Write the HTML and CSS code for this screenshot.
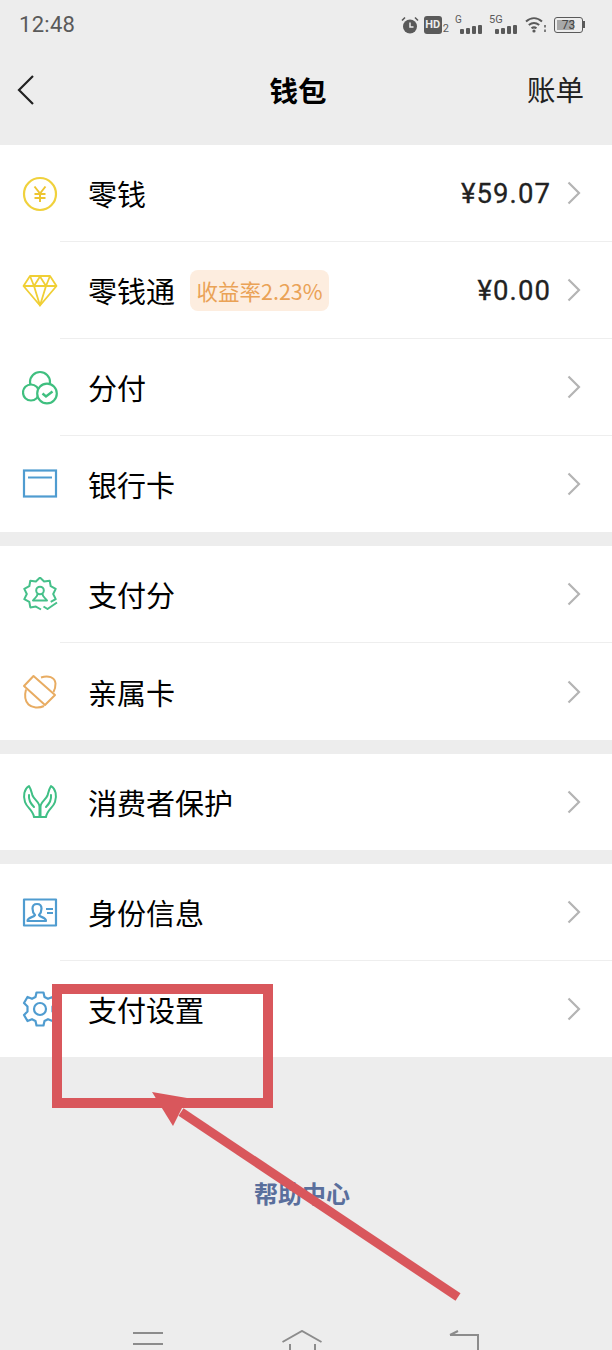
FILE: index.html
```html
<!DOCTYPE html>
<html lang="zh-CN">
<head>
<meta charset="utf-8">
<title>钱包</title>
<link rel="stylesheet" href="styles.css">
</head>
<body>
<div class="screen">
  <div class="status">
    <span class="time">12:48</span>
    <div class="status-icons">
      <svg class="s-alarm" width="18" height="18" viewBox="0 0 18 18"><circle cx="9" cy="10.500" r="7" fill="#5a5a5a"/><path d="M9 6.500V11H12.500" fill="none" stroke="#ededed" stroke-width="1.500"/><path d="M1 4.500 4 1.500M17 4.500 14 1.500" stroke="#5a5a5a" stroke-width="1.600"/></svg>
      <span class="hd"><b>HD</b><i>2</i></span>
      <span class="sig"><i>G</i><span class="bars"><u class="b1"></u><u class="b2"></u><u class="b3"></u><u class="b4"></u></span></span>
      <span class="sig sig5"><i>5G</i><span class="bars"><u class="b1"></u><u class="b2"></u><u class="b3"></u><u class="b4"></u></span></span>
      <svg class="s-wifi" width="21" height="17" viewBox="0 0 21 17"><g fill="none" stroke="#5a5a5a" stroke-width="2"><path d="M1 5.500C6 1 12 1 17 5.500"/><path d="M3.800 9C7.300 6.200 10.700 6.200 14.200 9"/><path d="M6.500 12.300C8 11.200 10 11.200 11.500 12.300"/></g><circle cx="9" cy="15" r="1.600" fill="#5a5a5a"/><path d="M20 9v2.500M20 13.500v2.500" stroke="#5a5a5a" stroke-width="1.500"/></svg>
      <span class="battery"><span class="cell"><span class="level"></span><em>73</em></span><span class="cap"></span></span>
    </div>
  </div>

  <header class="nav">
    <svg class="back" width="18" height="30" viewBox="0 0 18 30"><path d="M17 1 3 15 17 29" fill="none" stroke="#222" stroke-width="2.200"/></svg>
    <h1 class="title">钱包</h1>
    <span class="bill">账单</span>
  </header>

  <section class="group">
    <div class="row">
      <svg class="ico" viewBox="0 0 36 36"><circle cx="18" cy="18" r="16" fill="none" stroke="#f0d13c" stroke-width="2.200"/><path d="M12.500 10.500 18 17.500 23.500 10.500M18 17.500V26M12.500 18H23.500M12.500 22H23.500" fill="none" stroke="#edc531" stroke-width="2"/></svg>
      <div class="cell-main"><span class="label">零钱</span><span class="value">¥59.07</span><svg class="chev" width="14" height="24" viewBox="0 0 14 24"><path d="M1.500 1.500 12 12 1.500 22.500" fill="none" stroke="#b4b4b4" stroke-width="2.200"/></svg></div>
    </div>
    <div class="row">
      <svg class="ico" viewBox="0 0 36 36"><g fill="none" stroke="#f0cf35" stroke-width="1.800" stroke-linejoin="round"><path d="M8 3H28L34.500 13 18 32.500 1.500 13Z"/><path d="M1.500 13H34.500M8 3 12 13 18 32.500 24 13 28 3M12 13 18 3.500 24 13"/></g></svg>
      <div class="cell-main"><span class="label">零钱通</span><span class="tag">收益率2.23%</span><span class="value">¥0.00</span><svg class="chev" width="14" height="24" viewBox="0 0 14 24"><path d="M1.500 1.500 12 12 1.500 22.500" fill="none" stroke="#b4b4b4" stroke-width="2.200"/></svg></div>
    </div>
    <div class="row">
      <svg class="ico" viewBox="0 0 36 36"><g fill="#fff" stroke="#3fbf7f" stroke-width="2.200"><circle cx="18" cy="12" r="10"/><circle cx="9" cy="22.500" r="8"/><circle cx="25" cy="23.500" r="9.800"/></g><path d="M20.500 23.500 24 26.500 30.500 21.500" fill="none" stroke="#3fbf7f" stroke-width="2.400"/></svg>
      <div class="cell-main"><span class="label">分付</span><svg class="chev" width="14" height="24" viewBox="0 0 14 24"><path d="M1.500 1.500 12 12 1.500 22.500" fill="none" stroke="#b4b4b4" stroke-width="2.200"/></svg></div>
    </div>
    <div class="row">
      <svg class="ico" viewBox="0 0 36 36"><rect x="2" y="4.500" width="32" height="26" fill="none" stroke="#4f9cd0" stroke-width="2.200"/><path d="M6 11.500H30" stroke="#4f9cd0" stroke-width="2"/></svg>
      <div class="cell-main"><span class="label">银行卡</span><svg class="chev" width="14" height="24" viewBox="0 0 14 24"><path d="M1.500 1.500 12 12 1.500 22.500" fill="none" stroke="#b4b4b4" stroke-width="2.200"/></svg></div>
    </div>
  </section>

  <section class="group">
    <div class="row">
      <svg class="ico" viewBox="0 0 36 36"><g fill="none" stroke="#46c08a" stroke-width="2" stroke-linejoin="round"><path d="M19 32.500 13.900 29.600 8.300 30.400 7.300 24.800 2.300 22.100 4.800 17 2.300 11.900 7.300 9.200 8.300 3.700 13.900 4.500 18 0.500 22.100 4.500 27.700 3.700 28.700 9.200 33.700 11.900 31.200 17 33.700 22.100 28.700 24.800"/><circle cx="18" cy="13.500" r="3.800"/><path d="M15.500 17C15.500 20 13 20.500 11 23.500H25C23 20.500 20.500 20 20.500 17"/><path d="M21.500 29.500 25.500 32 35 25.500"/></g></svg>
      <div class="cell-main"><span class="label">支付分</span><svg class="chev" width="14" height="24" viewBox="0 0 14 24"><path d="M1.500 1.500 12 12 1.500 22.500" fill="none" stroke="#b4b4b4" stroke-width="2.200"/></svg></div>
    </div>
    <div class="row">
      <svg class="ico" viewBox="0 0 36 36"><g fill="none" stroke="#e8ac62" stroke-width="2" stroke-linejoin="round"><path d="M11.500 2 33 21 23 31 2 12Z"/><path d="M19 3.500C26 1 33 3 33.500 9.500C33.500 13 33 15.500 31.500 18"/><path d="M4 15.500C2.500 21 3 27 6.500 30.500C10 34 17 34.500 22 32"/></g></svg>
      <div class="cell-main"><span class="label">亲属卡</span><svg class="chev" width="14" height="24" viewBox="0 0 14 24"><path d="M1.500 1.500 12 12 1.500 22.500" fill="none" stroke="#b4b4b4" stroke-width="2.200"/></svg></div>
    </div>
  </section>

  <section class="group">
    <div class="row">
      <svg class="ico" viewBox="0 0 36 36"><g fill="none" stroke="#3fbf85" stroke-width="2" stroke-linejoin="round" stroke-linecap="round"><path d="M7 2C2 5 1 12 3 18C5 24 11 26 12 33H17.500V23C17.500 18 12.500 16 10.500 11.500C9.500 8 9 5 7 2Z"/><path d="M29 2C34 5 35 12 33 18C31 24 25 26 24 33H18.500V23C18.500 18 23.500 16 25.500 11.500C26.500 8 27 5 29 2Z"/><path d="M7 11C6.500 15 9 20 12 23M29 11C29.500 15 27 20 24 23"/></g></svg>
      <div class="cell-main"><span class="label">消费者保护</span><svg class="chev" width="14" height="24" viewBox="0 0 14 24"><path d="M1.500 1.500 12 12 1.500 22.500" fill="none" stroke="#b4b4b4" stroke-width="2.200"/></svg></div>
    </div>
  </section>

  <section class="group">
    <div class="row">
      <svg class="ico" viewBox="0 0 36 36"><g fill="none" stroke="#4f9cd0" stroke-width="2.200" stroke-linejoin="round"><rect x="2" y="4.500" width="32" height="26"/><path d="M5.500 26C5.500 22 12 22.500 13 20C11 18 10.500 16 10.500 13.500C10.500 10.500 12.500 9 15 9C17.500 9 19.500 10.500 19.500 13.500C19.500 16 19 18 17 20C18 22.500 24 22 24 26Z"/><path d="M24 14H31M25 18H31"/></g></svg>
      <div class="cell-main"><span class="label">身份信息</span><svg class="chev" width="14" height="24" viewBox="0 0 14 24"><path d="M1.500 1.500 12 12 1.500 22.500" fill="none" stroke="#b4b4b4" stroke-width="2.200"/></svg></div>
    </div>
    <div class="row">
      <svg class="ico" viewBox="0 0 36 36"><g fill="none" stroke="#4f9cd0" stroke-width="2.200" stroke-linejoin="round"><path d="M14.500 1.500H21.500L22.500 6 26 7.800 30.500 6 34 12 30.500 15.500V20.500L34 24 30.500 30 26 28.200 22.500 30 21.500 34.500H14.500L13.500 30 10 28.200 5.500 30 2 24 5.500 20.500V15.500L2 12 5.500 6 10 7.800 13.500 6Z"/><circle cx="18" cy="18" r="6"/></g></svg>
      <div class="cell-main"><span class="label">支付设置</span><svg class="chev" width="14" height="24" viewBox="0 0 14 24"><path d="M1.500 1.500 12 12 1.500 22.500" fill="none" stroke="#b4b4b4" stroke-width="2.200"/></svg></div>
    </div>
  </section>

  <footer class="foot">
    <a class="help">帮助中心</a>
    <div class="sysnav">
      <svg width="30" height="21" viewBox="0 0 30 21"><path d="M0 3H30M0 14H30" stroke="#8c8c8c" stroke-width="2"/></svg>
      <svg class="home" width="40" height="21" viewBox="0 0 40 21"><path d="M0.500 12 20 1 39.500 12M8 14V21M33 14V21" fill="none" stroke="#8c8c8c" stroke-width="2"/></svg>
      <svg width="30" height="21" viewBox="0 0 30 21"><path d="M1 5H29V21M9 1 1 5" fill="none" stroke="#8c8c8c" stroke-width="2"/></svg>
    </div>
  </footer>

  <svg class="markup" width="612" height="1350" viewBox="0 0 612 1350">
    <rect x="57" y="989" width="211" height="114" fill="none" stroke="#d9575c" stroke-width="10"/>
    <path d="M181 1112 458 1297" stroke="#d9575c" stroke-width="9"/>
    <path d="M152 1092 187 1098 173 1126Z" fill="#d9575c"/>
  </svg>
</div>
</body>
</html>
```
FILE: styles.css
```css
* { box-sizing: border-box; }
html, body { margin: 0; padding: 0; }
body { background: #ededed; font-family: "Noto Sans CJK SC", "Noto Sans", sans-serif; color: #111; }
.screen { position: relative; width: 612px; height: 1350px; overflow: hidden; background: #ededed; }

.status { height: 48px; display: flex; align-items: center; justify-content: space-between; padding: 1px 27px 0 19px; color: #5a5a5a; }
.time { font: 400 22px/1 "Roboto", sans-serif; letter-spacing: .3px; }
.status-icons { display: flex; align-items: center; }
.hd { display: flex; align-items: flex-end; margin-left: 5px; }
.hd b { background: #5a5a5a; color: #ededed; border-radius: 3px; width: 18px; height: 18px; font: 700 11px/18px "Roboto", sans-serif; text-align: center; display: block; }
.hd i { font: 400 11px/11px "Roboto", sans-serif; margin-left: 1px; }
.sig { position: relative; width: 27px; height: 19px; display: block; margin-left: 6px; }
.sig i { position: absolute; left: 0; top: 0; font: 400 10px/10px "Roboto", sans-serif; }
.sig5 { width: 28px; margin-left: 7px; }
.sig5 i { font-size: 11px; }
.bars { position: absolute; right: 0; bottom: 0; display: flex; align-items: flex-end; gap: 2px; }
.bars u { display: block; width: 4px; background: #5a5a5a; border-radius: 1px; }
.b1 { height: 5px; } .b2 { height: 6px; } .b3 { height: 8px; } .b4 { height: 9px; }
.s-wifi { margin-left: 8px; }
.battery { display: flex; align-items: center; margin-left: 8px; }
.cell { display: block; position: relative; width: 29px; height: 16px; border: 1px solid #5a5a5a; border-radius: 3px; padding: 2px; }
.level { display: block; width: 72%; height: 100%; background: #a8a8a8; }
.cell em { position: absolute; inset: 0; font: 400 12px/14px "Roboto", sans-serif; text-align: center; color: #444; }
.cap { width: 2px; height: 7px; background: #5a5a5a; }

.nav { height: 97px; position: relative; display: flex; align-items: center; justify-content: center; padding: 0 16px 14px 0; }
.back { position: absolute; left: 16px; top: 27px; }
.title { margin: 0; font-size: 28.500px; font-weight: 700; line-height: 40px; color: #000; }
.bill { position: absolute; right: 28px; top: 21px; font-size: 28.500px; line-height: 40px; color: #222; }

.group { background: #fff; margin-bottom: 14px; }
.row { height: 97px; display: flex; align-items: stretch; padding-left: 22px; }
.group:nth-of-type(1) .row:last-child, .group:nth-of-type(4) .row:last-child, .group:nth-of-type(3) .row { height: 96px; }
.ico { width: 36px; height: 36px; flex: none; align-self: center; }
.cell-main { flex: 1; margin-left: 2px; padding: 0 31px 0 28px; display: flex; align-items: center; border-bottom: 1px solid #eeeeee; }
.row:last-child .cell-main { border-bottom: 0; }
.label { font-size: 29px; line-height: 40px; color: #000; }
.tag { margin: 0 0 0 15px; background: #fdeddf; color: #eaa256; border-radius: 8px; font-size: 21.500px; line-height: 41px; height: 41px; width: 139px; text-align: center; white-space: nowrap; }
.value { margin: 2px 0 0 auto; font: 400 27.500px/40px "Roboto", sans-serif; letter-spacing: 1.100px; color: #222; -webkit-text-stroke: .3px #222; }
.chev { flex: none; margin-left: 16px; }
.cell-main .label + .chev { margin-left: auto; }

.foot { display: flex; flex-direction: column; align-items: center; }
.help { margin-top: 105px; padding-right: 8px; font-size: 24px; font-weight: 700; line-height: 34px; color: #5a6f9c; }
.sysnav { width: 346px; margin-top: 120px; display: flex; justify-content: space-between; align-items: flex-start; }
.home { margin-right: 8px; }

.markup { position: absolute; left: 0; top: 0; pointer-events: none; }
```
